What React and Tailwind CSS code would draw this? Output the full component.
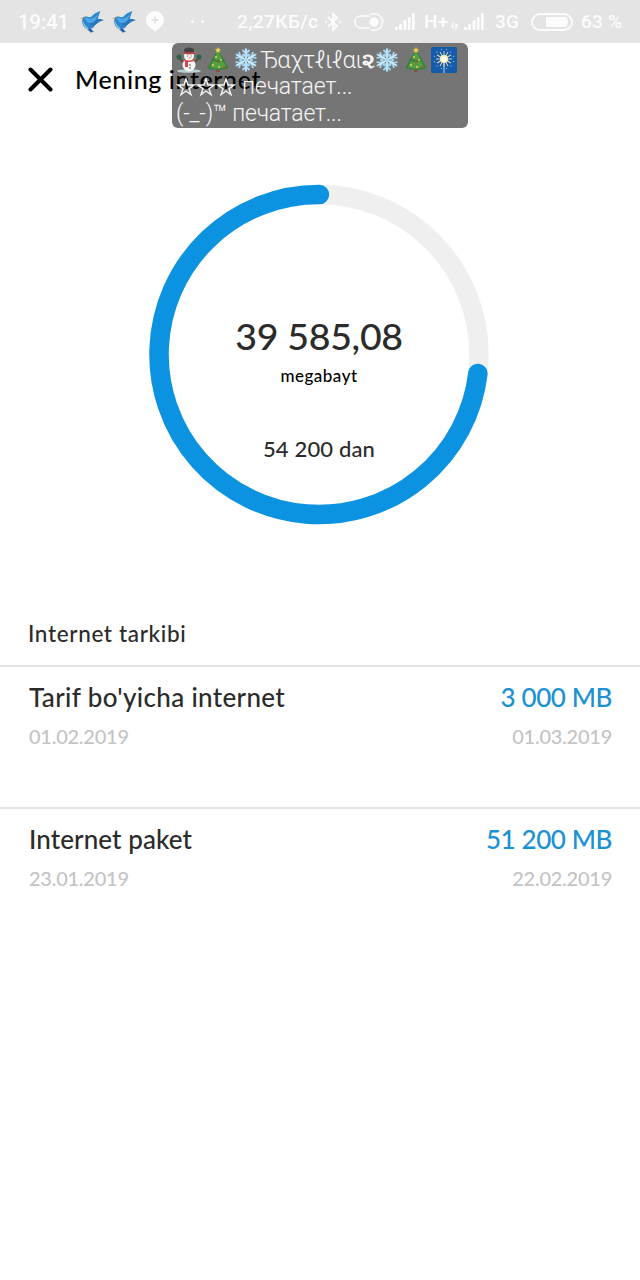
import React from "react";

const Bird = () => (
  <svg viewBox="0 0 24 24" className="h-6 w-6 shrink-0">
    <path d="M2 9q1-3 4-2.500 3 .5 5 .5 3-4 9.500-6-1.500 3-2.500 7-.5 2.500-2 4-1 6-6 7l1 3q-3-1-4-3-5-2-5-10Z" fill="#2f86cd" />
    <path d="M10 11q5-4 14-1-5 1.500-7.500 4-3 2.500-6 1Z" fill="#2a76bb" />
    <path d="M4 8q4-1 6 1 5-1 8-5-1 5-4 8-4 2-7 0Z" fill="#4ba6e4" />
    <path d="M2.500 10q2 6 7 9l-1.500.5q-5-2.500-5.500-9.500Z" fill="#9fc7d0" />
    <path d="m8 18 3 1 3 3-2-.3-1 1.300Z" fill="#235a96" />
    <path d="M3 7.500 0 8l3 2Z" fill="#e0b45c" />
  </svg>
);

const Signal = () => (
  <svg viewBox="0 0 21 18" className="h-[18px] w-[21px] shrink-0" fill="#fcfcfc">
    <rect x="0" y="14" width="3" height="3" rx="1" />
    <rect x="4" y="11" width="3" height="6" rx="1" />
    <rect x="8.5" y="7" width="3" height="10" rx="1" />
    <rect x="13" y="4" width="2.5" height="13" rx="1" />
    <rect x="17" y="0" width="2.7" height="17" rx="1" />
  </svg>
);

const Snowman = () => (
  <svg viewBox="0 0 26 26" className="h-[26px] w-[26px] shrink-0">
    <ellipse cx="13" cy="24" rx="12" ry="1.8" fill="#b9d0d5" />
    <path d="m7 15-4-4m16 4 4-4" stroke="#5b4a3c" strokeWidth="1.8" />
    <circle cx="3" cy="10" r="2.6" fill="#2f6249" />
    <circle cx="23" cy="10" r="2.6" fill="#2f6249" />
    <circle cx="13" cy="18" r="6.5" fill="#f6f6f4" />
    <circle cx="13" cy="9" r="5" fill="#f6f6f4" />
    <path d="M8 2q5-3 10 0v5H8Z" fill="#424246" />
    <path d="M8 4.500q5 2 10 0v2q-5 2-10 0Z" fill="#c74047" />
    <path d="M8 12q5 3 10 0v2q-3 1-6 1v5H9v-5Z" fill="#d94349" />
    <path d="M11 9h.8m3 0h.8" stroke="#333" strokeWidth="1.2" />
    <path d="m13 10 3 1-3 .6Z" fill="#e88a3e" />
    <circle cx="14" cy="18" r=".8" fill="#444" /><circle cx="14" cy="21" r=".8" fill="#444" />
  </svg>
);

const Tree = () => (
  <svg viewBox="0 0 24 26" className="h-[26px] w-[24px] shrink-0">
    <path d="M10 21h4v4h-4Z" fill="#855541" />
    <path d="M12 2Q9 8 6 12q-2 5-5 9 11 4 22 0-3-4-5-9-3-4-6-10Z" fill="#39803f" />
    <path d="m12 3-4 9q4 2 8 0l-4-9m-5 11-3 6q8 3 16 0l-3-6q-5 2-10 0" fill="#569f41" />
    <path d="m12 0 1 2 2 .3-1.500 1.400.4 2-1.900-1-1.900 1 .4-2L9 2.300l2-.3Z" fill="#edcf48" />
    <g fill="#e7cf63"><circle cx="10" cy="10" r="1" /><circle cx="15" cy="13" r="1" /><circle cx="7" cy="18" r="1" /><circle cx="13" cy="20" r="1" /></g>
    <g fill="#b94840"><circle cx="12" cy="15" r="1" /><circle cx="18" cy="20" r="1" /></g>
  </svg>
);

const Snowflake = () => (
  <svg viewBox="0 0 24 24" className="h-6 w-6 shrink-0" fill="none" strokeLinecap="round">
    {[0, 60, 120, 180, 240, 300].map((a) => (
      <g key={a} transform={`rotate(${a} 12 12)`}>
        <path d="M12 12V1M9 2.500l3 3 3-3M9.700 6.500 12 8.800l2.300-2.300" stroke="#a5d8f5" strokeWidth="1.900" />
        <path d="M12 10V1.500" stroke="#dcf2fc" strokeWidth=".9" />
      </g>
    ))}
  </svg>
);

const Sparkler = () => (
  <svg viewBox="0 0 26 26" className="h-[26px] w-[26px] shrink-0">
    <rect width="26" height="26" rx="1.5" fill="#155baa" />
    {[0, 30, 60, 90, 120, 150, 180, 210, 240, 270, 300, 330].map((a) => (
      <g key={a} transform={`rotate(${a} 13 12)`}>
        <path d="M13 12V4" stroke="#e5ddae" strokeWidth=".9" />
        <circle cx="15.500" cy="2.500" r=".7" fill="#7fb0da" />
      </g>
    ))}
    <circle cx="13" cy="12" r="4" fill="#fff1ae" />
    <circle cx="13" cy="12" r="2.500" fill="#fff" />
    <path d="M13 15v11" stroke="#c9d1d5" strokeWidth="1" />
  </svg>
);

const Star = () => (
  <svg viewBox="0 0 20 20" className="h-5 w-5 shrink-0" fill="none" stroke="#f5f5f5" strokeWidth="1.400">
    <path d="m10 2 2 6h6l-5 3.700 2 6-5-3.700-5 3.700 2-6L2 8h6Z" />
  </svg>
);

function StatusBar() {
  return (
    <header className="flex h-[43px] items-center bg-[#e4e4e4] pl-[18px] font-[Roboto,sans-serif] text-[20px] font-medium whitespace-nowrap text-[#fcfcfc]">
      <span className="w-[62px] tracking-[0.1px]">19:41</span>
      <div className="flex w-[66px] gap-2"><Bird /><Bird /></div>
      <svg viewBox="0 0 18 21" className="h-[21px] w-[18px] shrink-0" fill="#fcfcfc">
        <path d="M9 0a9 9 0 0 1 9 9c0 6-5 8-9 11.500C5 17 0 15 0 9a9 9 0 0 1 9-9Z" />
        <path d="M9 5.500v7M5.500 9h7" stroke="#e4e4e4" strokeWidth="1.800" />
      </svg>
      <div className="ml-[27px] flex w-[46px] gap-[7px]"><i className="size-[3px] rounded-full bg-[#fcfcfc]" /><i className="size-[3px] rounded-full bg-[#fcfcfc]" /></div>
      <span className="w-[87px] pt-px text-[19px] tracking-[0.4px]">2,27КБ/с</span>
      <svg viewBox="0 0 18 20" className="h-5 w-[18px] shrink-0" fill="none" stroke="#fcfcfc" strokeWidth="1.800">
        <path d="m4 5 9 9-4 4V2l4 4-9 9M2 9v2m14-2v2" />
      </svg>
      <svg viewBox="0 0 31 20" className="ml-3 h-5 w-[31px] shrink-0" fill="none" stroke="#fcfcfc" strokeWidth="1.500">
        <path d="M16 4H7C3 4 1 7 1 10s2 6 6 6h9" />
        <path d="M17 2.500a8.200 8.200 0 1 1 0 15" />
        <circle cx="20" cy="10" r="4.500" fill="#fcfcfc" stroke="none" />
      </svg>
      <div className="ml-[10px] flex w-[29px]"><Signal /></div>
      <span className="w-[26px] pt-px text-[19px] tracking-[0.3px]">H+</span>
      <svg viewBox="0 0 9 8" className="mt-2 h-2 w-[9px] shrink-0" stroke="#fcfcfc" strokeWidth="1.300" fill="none"><path d="M3 0v6L1 4m5 4V2l2 2" /></svg>
      <div className="ml-[5px] flex w-[31px]"><Signal /></div>
      <span className="w-[36px] pt-px text-[19px] tracking-[0.3px]">3G</span>
      <svg viewBox="0 0 42 18" className="h-[18px] w-[42px] shrink-0" fill="none">
        <rect x="1" y="1" width="40" height="16" rx="8" stroke="#fcfcfc" strokeWidth="1.800" />
        <path d="M15 4h18q4 0 4 5t-4 5H15Z" fill="#fcfcfc" />
      </svg>
      <span className="ml-2 pt-px text-[19px] tracking-[0.2px]">63 %</span>
    </header>
  );
}

function TypingOverlay() {
  return (
    <div className="absolute top-[43px] left-[172px] h-[85px] w-[296px] rounded-[6px] bg-black/54 pt-1 pl-1 font-[Roboto,'DejaVu_Sans',sans-serif] text-[23px] font-light whitespace-nowrap text-[#f5f5f5]">
      <div className="flex h-[26px] items-center">
        <Snowman />
        <span className="ml-1 flex"><Tree /></span>
        <span className="ml-1 flex"><Snowflake /></span>
        <span className="ml-[2px] w-[115px] text-[24px] leading-[26px] tracking-[-0.5px]">Ђαχτℓιℓαι<span className="text-[22px] font-bold">૨</span></span>
        <Snowflake />
        <span className="ml-[5px] flex"><Tree /></span>
        <span className="ml-[3px] flex"><Sparkler /></span>
      </div>
      <div className="flex h-[27px] items-center pt-px"><Star /><Star /><Star /><span className="ml-[6px] tracking-[-0.1px]">печатает...</span></div>
      <div className="h-[27px] leading-[27px] tracking-[-0.2px]">(-_-)™ печатает...</div>
    </div>
  );
}

function UsageRing() {
  return (
    <section className="mt-[68px] ml-[149px] grid h-[340px] w-[340px]">
      <svg viewBox="0 0 340 340" className="col-start-1 row-start-1 size-[340px] overflow-visible" fill="none" strokeWidth="19.500">
        <circle cx="170" cy="170.500" r="160" stroke="#efefef" />
        <path d="M170.500 10.500A160 160 0 1 0 328.900 189.500" stroke="#0b93e1" strokeLinecap="round" />
      </svg>
      <div className="col-start-1 row-start-1 flex flex-col items-center text-[#2b2b2b]">
        <p className="mt-[130px] text-[37.500px] leading-[44px] tracking-[-0.3px]">39 585,08</p>
        <p className="mt-[6px] text-[17px] leading-6 tracking-[0.5px] text-black">megabayt</p>
        <p className="mt-[47px] text-[22px] leading-7 tracking-[0.15px]">54 200 dan</p>
      </div>
    </section>
  );
}

function Plan({ name, nameTracking, amount, start, end }) {
  return (
    <article className="h-[142px] border-t-2 border-[#e4e4e4] pt-[13px] pr-[28px] pl-[29px]">
      <div className="flex justify-between text-[26px] leading-[34px] text-[#2b2b2b]">
        <h2 className={nameTracking}>{name}</h2><span className="tracking-[-0.4px] text-[#1b91d5]">{amount}</span>
      </div>
      <div className="mt-[9px] flex justify-between text-[20px] leading-[26px] tracking-[-0.25px] text-[#c4c4c4]">
        <time>{start}</time><time>{end}</time>
      </div>
    </article>
  );
}

export default function App() {
  return (
    <main className="relative h-[1280px] w-[640px] overflow-hidden bg-white font-[Lato,sans-serif] font-medium">
      <StatusBar />
      <div className="flex h-[73px] items-center pl-[28px]">
        <svg viewBox="0 0 25 25" className="size-[25px]" stroke="#000" strokeWidth="4" strokeLinecap="round"><path d="m2.500 2.500 20 20m0-20-20 20" /></svg>
        <h1 className="ml-[22px] text-[25px] tracking-[0.6px]">Mening internet</h1>
      </div>
      <UsageRing />
      <h2 className="mt-[95px] h-[46px] pl-[28px] text-[22.500px] leading-[30px] tracking-[0.65px] text-[#2b2b2b]">Internet tarkibi</h2>
      <Plan name="Tarif bo'yicha internet" nameTracking="tracking-[0.35px]" amount="3 000 MB" start="01.02.2019" end="01.03.2019" />
      <Plan name="Internet paket" nameTracking="tracking-[0.1px]" amount="51 200 MB" start="23.01.2019" end="22.02.2019" />
      <TypingOverlay />
    </main>
  );
}
